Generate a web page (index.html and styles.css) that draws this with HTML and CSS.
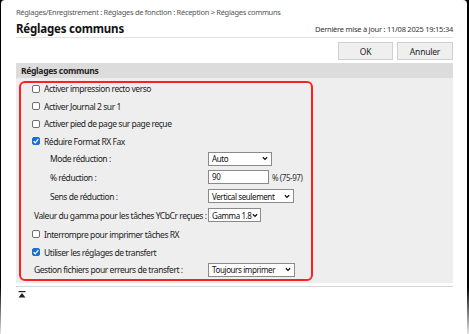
FILE: index.html
```html
<!DOCTYPE html>
<html lang="fr">
<head>
    <meta charset="UTF-8">
    <meta name="viewport" content="width=device-width, initial-scale=1.0">
    <title>Réglages communs</title>
    <link rel="stylesheet" href="styles.css">
</head>
<body>
<div class="window">
    <div class="crumb">Réglages/Enregistrement : Réglages de fonction : Réception &gt; Réglages communs</div>

    <div class="title-row">
        <h1>Réglages communs</h1>
        <span class="updated">Dernière mise à jour : 11/08 2025 19:15:34</span>
    </div>

    <div class="toolbar">
        <button class="btn btn-ok">OK</button>
        <button class="btn btn-cancel">Annuler</button>
    </div>

    <div class="section">
        <div class="section-head">Réglages communs</div>
        <div class="section-body">
            <div class="row check"><span class="box"></span>Activer impression recto verso</div>
            <div class="row check"><span class="box"></span>Activer Journal 2 sur 1</div>
            <div class="row check"><span class="box"></span>Activer pied de page sur page reçue</div>
            <div class="row check"><span class="box on"><svg viewBox="0 0 8 8"><path d="M1.6 4.2 L3.3 5.8 L6.4 2.2"/></svg></span>Réduire Format RX Fax</div>

            <div class="row field">
                <span class="label sub">Mode réduction :</span>
                <span class="select w-mode">Auto<svg viewBox="0 0 7 5"><path d="M1 1 L3.5 3.6 L6 1"/></svg></span>
            </div>
            <div class="row field wide">
                <span class="label sub">% réduction :</span>
                <span class="value"><span class="input">90</span><span class="hint">% (75-97)</span></span>
            </div>
            <div class="row field wide">
                <span class="label sub">Sens de réduction :</span>
                <span class="select w-sens">Vertical seulement<svg viewBox="0 0 7 5"><path d="M1 1 L3.5 3.6 L6 1"/></svg></span>
            </div>
            <div class="row field wide">
                <span class="label">Valeur du gamma pour les tâches YCbCr reçues :</span>
                <span class="select w-gamma">Gamma 1.8<svg viewBox="0 0 7 5"><path d="M1 1 L3.5 3.6 L6 1"/></svg></span>
            </div>

            <div class="row check wide"><span class="box"></span>Interrompre pour imprimer tâches RX</div>
            <div class="row check"><span class="box on"><svg viewBox="0 0 8 8"><path d="M1.6 4.2 L3.3 5.8 L6.4 2.2"/></svg></span>Utiliser les réglages de transfert</div>

            <div class="row field">
                <span class="label">Gestion fichiers pour erreurs de transfert :</span>
                <span class="select w-gestion">Toujours imprimer<svg viewBox="0 0 7 5"><path d="M1 1 L3.5 3.6 L6 1"/></svg></span>
            </div>
        </div>
        <div class="highlight"></div>
    </div>

    <div class="to-top">
        <svg viewBox="0 0 8 7"><rect x="0.5" y="0" width="7" height="1.2"/><path d="M4 2 L7.5 6.5 L0.5 6.5 Z"/></svg>
    </div>
</div>
</body>
</html>
```

FILE: styles.css
```css
body {
    margin: 0;
    height: 334px;
    overflow: hidden;
    background: linear-gradient(#000 86%, #e4e4e4);
    font-family: "Noto Sans", "Open Sans", sans-serif;
    color: #222;
}

.window {
    margin: 0 2px 0 1px;
    height: 334px;
    padding: 0 14px 0 15px;
    box-sizing: border-box;
    background: #fff;
    border-radius: 4px 4px 0 0;
}

.crumb {
    padding-top: 6px;
    font-size: 7.5px;
    line-height: 12px;
    letter-spacing: -0.3px;
    color: #555;
    white-space: nowrap;
}

.title-row {
    display: flex;
    justify-content: space-between;
    align-items: flex-end;
    height: 19px;
    border-bottom: 1px solid #e2e2e2;
}

h1 {
    margin: 0;
    font-size: 11.5px;
    line-height: 16px;
    font-weight: 700;
    letter-spacing: -0.2px;
    color: #111;
}

.updated {
    font-size: 7.5px;
    line-height: 12px;
    padding-bottom: 2px;
    letter-spacing: -0.25px;
    color: #333;
}

.toolbar {
    display: flex;
    justify-content: flex-end;
    gap: 4px;
    margin-top: 4px;
}

.btn {
    height: 18px;
    padding: 0;
    border: 1px solid #cfcfcf;
    background: #efefef;
    font-family: inherit;
    font-size: 8.5px;
    color: #222;
    letter-spacing: -0.2px;
}

.btn-ok { width: 55px; }
.btn-cancel { width: 56px; }

.section {
    position: relative;
    margin-top: 3px;
}

.section-head {
    height: 15px;
    line-height: 15px;
    padding-left: 5px;
    background: #dcdcdc;
    font-size: 8.5px;
    font-weight: 700;
    letter-spacing: -0.3px;
    color: #222;
}

.section-body {
    background: #eeeeee;
    padding: 2px 0 4px;
}

.row {
    display: flex;
    align-items: center;
    height: 17.5px;
    padding-left: 16px;
    font-size: 8.5px;
    letter-spacing: -0.45px;
    white-space: nowrap;
}

.row.wide { height: 19px; }

.row.field {
    display: grid;
    grid-template-columns: 176px auto;
    align-items: center;
}

.label { padding-left: 2px; }
.label.sub { padding-left: 18px; }

.box {
    display: inline-block;
    width: 8px;
    height: 8px;
    margin-right: 4px;
    box-sizing: border-box;
    border: 1px solid #6e6e6e;
    border-radius: 2px;
    background: #fff;
}

.box.on {
    border-color: #1a6fd6;
    background: #1a6fd6;
}

.box svg {
    display: block;
    width: 8px;
    height: 8px;
    margin: -1px;
}

.box svg path {
    fill: none;
    stroke: #fff;
    stroke-width: 1.3;
}

.select {
    display: flex;
    justify-content: space-between;
    align-items: center;
    height: 14px;
    padding: 0 3px;
    box-sizing: border-box;
    border: 1px solid #8a8a8a;
    background: #fff;
    color: #111;
    font-size: 8px;
    letter-spacing: -0.4px;
}

.select svg {
    flex: none;
    width: 6px;
    height: 5px;
}

.select svg path {
    fill: none;
    stroke: #111;
    stroke-width: 1.5;
}

.w-mode { width: 64px; }
.w-sens { width: 86px; }
.w-gamma { width: 53px; padding-right: 2px; }
.w-gestion { width: 87px; }

.value {
    display: flex;
    align-items: center;
    gap: 3px;
}

.input {
    width: 61px;
    height: 14px;
    line-height: 12px;
    padding-left: 3px;
    box-sizing: border-box;
    border: 1px solid #8a8a8a;
    background: #fff;
    color: #111;
    font-size: 8px;
}

.hint { color: #333; font-size: 8px; }

.highlight {
    position: absolute;
    left: 3px;
    top: 18px;
    width: 294px;
    height: 200px;
    box-sizing: border-box;
    border: 2px solid #ff1f1f;
    border-radius: 6px;
    pointer-events: none;
}

.to-top {
    margin-top: 3px;
    border-top: 1px solid #d6d6d6;
    padding: 4px 0 0 2px;
}

.to-top svg {
    display: block;
    width: 8px;
    height: 7px;
    fill: #222;
}
```
